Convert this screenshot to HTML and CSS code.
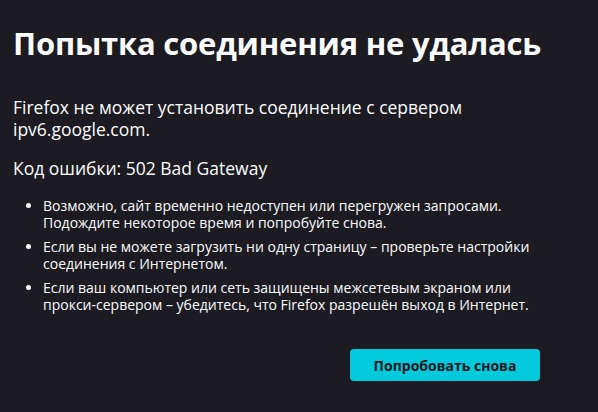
FILE: index.html
```html
<!DOCTYPE html>
<html lang="ru">
<head>
<meta charset="utf-8">
<title>Проблема при загрузке страницы</title>
<link rel="stylesheet" href="styles.css">
</head>
<body>
<main class="container">
  <h1 class="title">Попытка соединения не удалась</h1>
  <p class="intro">Firefox не может установить соединение с сервером<br>ipv6.google.com.</p>
  <p class="code">Код ошибки: 502 Bad Gateway</p>
  <ul class="tips">
    <li>Возможно, сайт временно недоступен или перегружен запросами.<br>Подождите некоторое время и попробуйте снова.</li>
    <li>Если вы не можете загрузить ни одну страницу – проверьте настройки<br>соединения с Интернетом.</li>
    <li>Если ваш компьютер или сеть защищены межсетевым экраном или<br>прокси-сервером – убедитесь, что Firefox разрешён выход в Интернет.</li>
  </ul>
  <div class="actions">
    <button class="retry">Попробовать снова</button>
  </div>
</main>
</body>
</html>
```

FILE: styles.css
```css
html, body {
  margin: 0;
  padding: 0;
  background: #1c1b22;
  color: #fbfbfe;
  font-family: "Open Sans", "Noto Sans", sans-serif;
}
.container {
  width: 527px;
  padding: 22px 0 0 13px;
}
.title {
  margin: 0;
  font-size: 31px;
  font-weight: 700;
  line-height: 42px;
  letter-spacing: -0.2px;
  white-space: nowrap;
}
.intro {
  margin: 32px 0 0;
  font-size: 17.5px;
  line-height: 22px;
}
.code {
  margin: 17px 0 0;
  font-size: 17.5px;
  line-height: 22px;
}
.tips {
  margin: 18px 0 0;
  padding-left: 30px;
  font-size: 14px;
  line-height: 17px;
  white-space: nowrap;
}
.tips li {
  margin-bottom: 7px;
}
.actions {
  display: flex;
  justify-content: flex-end;
  margin-top: 36px;
}
.retry {
  width: 190px;
  height: 32px;
  border: none;
  border-radius: 4px;
  background: #00cadb;
  color: #15141a;
  font-family: inherit;
  font-size: 14px;
  font-weight: 700;
}
```
